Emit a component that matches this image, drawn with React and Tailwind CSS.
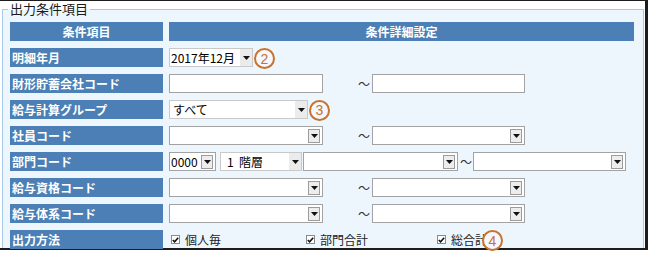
import React from 'react'

const jp = "font-['Noto_Sans_CJK_JP','Noto_Sans',sans-serif]"

function Arrow() {
  return (
    <svg width="7" height="4" viewBox="0 0 7 4">
      <path d="M0 0h7L3.5 4z" fill="#111" />
    </svg>
  )
}

// select with a bordered dropdown button
function BoxSelect({ w, value }) {
  return (
    <div className={`flex h-[19px] shrink-0 items-center border border-[#a3a3a3] bg-white pl-[1px] text-[12px] ${w}`}>
      <span className="leading-none">{value}</span>
      <div className="ml-auto mr-[2px] flex h-[14px] w-[12px] items-center justify-center border border-[#9c9c9c] bg-[#ededed]">
        <Arrow />
      </div>
    </div>
  )
}

// flat select, grey arrow strip on the right
function FlatSelect({ w, value, pad = 'pl-[1px]' }) {
  return (
    <div className={`flex h-[19px] shrink-0 items-center border border-[#c9c9c9] bg-white text-[12px] ${pad} ${w}`}>
      <span className="whitespace-pre leading-none">{value}</span>
      <div className="ml-auto flex h-full w-[12px] items-center justify-center bg-[#ebebeb]">
        <Arrow />
      </div>
    </div>
  )
}

function TextBox({ w }) {
  return <div className={`h-[19px] shrink-0 border border-[#a3a3a3] bg-white ${w}`} />
}

function Tilde({ w }) {
  return <span className={`shrink-0 text-right text-[12px] leading-none text-[#333] ${w}`}>～</span>
}

function Mark({ n, className = '' }) {
  return (
    <span className={`flex h-[21px] w-[21px] shrink-0 items-center justify-center rounded-full border-2 border-[#c8722f] bg-[#f4f8fc] font-['Liberation_Sans',sans-serif] text-[14px] leading-none text-[#c8722f] ${className}`}>
      {n}
    </span>
  )
}

function Check({ label, w }) {
  return (
    <div className={`flex shrink-0 items-center gap-[5px] ${w}`}>
      <span className="flex h-[9px] w-[9px] items-center justify-center border border-[#8a8a8a] bg-white">
        <svg width="7" height="6" viewBox="0 0 7 6">
          <path d="M0.8 3 L2.6 4.8 L6.2 0.8" fill="none" stroke="#111" strokeWidth="1.6" />
        </svg>
      </span>
      <span className="text-[12px] leading-none text-[#222]">{label}</span>
    </div>
  )
}

function Label({ children }) {
  return (
    <div className="flex h-[19px] items-center bg-[#4b7fb5] pl-[2px] text-[12px] font-bold leading-none text-white">
      {children}
    </div>
  )
}

function Cell({ children }) {
  return <div className="flex h-[19px] items-center">{children}</div>
}

export default function App() {
  return (
    <div className={`h-[254px] w-[648px] bg-white text-black ${jp}`}>
      <div className="h-[250px] w-[648px] border-t border-r-[3px] border-b-2 border-[#1c1c1c] bg-white">
        <fieldset className="ml-[2px] mt-[1px] h-[246px] w-[642px] border border-b-0 border-[#a9c9e8] bg-[#eef6fd] pl-[7px] pt-[6px]">
          <legend className="ml-[-2px] px-[2px] text-[13px] leading-[14px] text-[#1a1a1a]">出力条件項目</legend>

          <div className="grid grid-cols-[153px_465px] gap-x-[6px] gap-y-[7px]">
            <div className="flex h-[19px] items-center justify-center bg-[#4b7fb5] text-[12px] font-bold leading-none text-white">条件項目</div>
            <div className="flex h-[19px] items-center justify-center bg-[#4b7fb5] text-[12px] font-bold leading-none text-white">条件詳細設定</div>

            <Label>明細年月</Label>
            <Cell>
              <FlatSelect w="w-[84px]" value="2017年12月" />
              <Mark n="2" className="ml-[1px] mt-[2px]" />
            </Cell>

            <Label>財形貯蓄会社コード</Label>
            <Cell>
              <TextBox w="w-[154px]" />
              <Tilde w="w-[49px] pr-[2px]" />
              <TextBox w="w-[153px]" />
            </Cell>

            <Label>給与計算グループ</Label>
            <Cell>
              <FlatSelect w="w-[139px]" value="すべて" pad="pl-[3px]" />
              <Mark n="3" className="ml-[1px] mt-[1px]" />
            </Cell>

            <Label>社員コード</Label>
            <Cell>
              <BoxSelect w="w-[154px]" value="" />
              <Tilde w="w-[49px] pr-[2px]" />
              <BoxSelect w="w-[153px]" value="" />
            </Cell>

            <Label>部門コード</Label>
            <Cell>
              <BoxSelect w="w-[47px]" value="0000" />
              <div className="w-[4px] shrink-0" />
              <FlatSelect w="w-[82px]" value="1  階層" pad="pl-[6px]" />
              <div className="w-[1px] shrink-0" />
              <BoxSelect w="w-[155px]" value="" />
              <Tilde w="w-[15px] pr-[1px]" />
              <BoxSelect w="w-[153px]" value="" />
            </Cell>

            <Label>給与資格コード</Label>
            <Cell>
              <BoxSelect w="w-[154px]" value="" />
              <Tilde w="w-[49px] pr-[2px]" />
              <BoxSelect w="w-[153px]" value="" />
            </Cell>

            <Label>給与体系コード</Label>
            <Cell>
              <BoxSelect w="w-[154px]" value="" />
              <Tilde w="w-[49px] pr-[2px]" />
              <BoxSelect w="w-[153px]" value="" />
            </Cell>

            <Label>出力方法</Label>
            <Cell>
              <div className="w-[2px] shrink-0" />
              <Check label="個人毎" w="w-[135px]" />
              <Check label="部門合計" w="w-[131px]" />
              <Check label="総合計" w="" />
              <Mark n="4" className="-ml-[5px] mt-[2px]" />
            </Cell>
          </div>
        </fieldset>
      </div>
    </div>
  )
}
